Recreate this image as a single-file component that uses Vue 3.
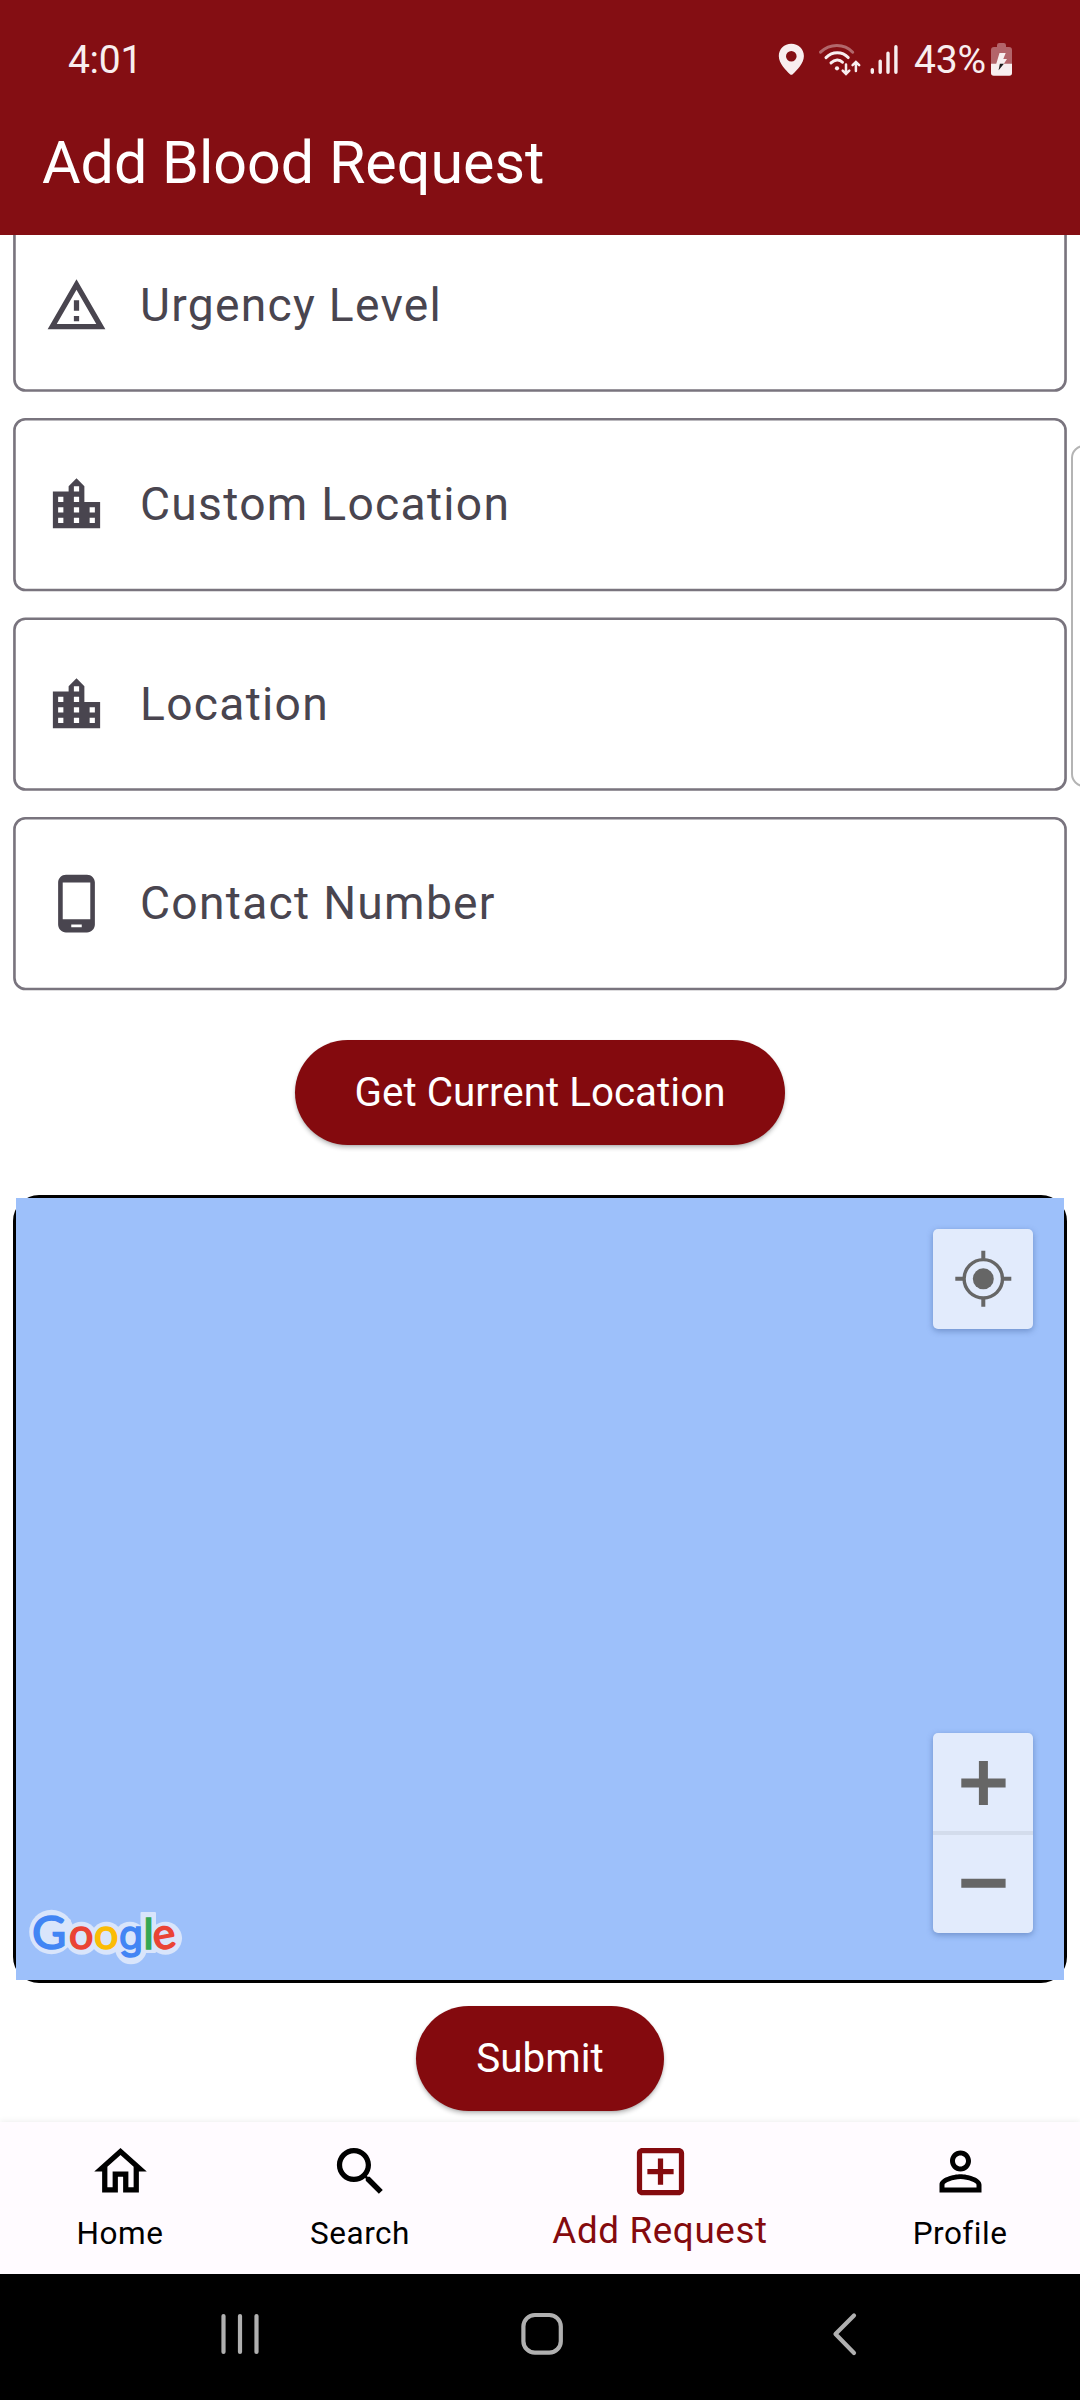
<script setup>
const cityIcon =
  'M15 11V5l-3-3-3 3v2H3v14h18V11h-6zm-8 8H5v-2h2v2zm0-4H5v-2h2v2zm0-4H5V9h2v2zm6 8h-2v-2h2v2zm0-4h-2v-2h2v2zm0-4h-2V9h2v2zm0-4h-2V5h2v2zm6 12h-2v-2h2v2zm0-4h-2v-2h2v2z'

const fields = [
  {
    label: 'Urgency Level',
    offset: 0.5,
    icon: 'M12 5.99L19.53 19H4.47L12 5.99M12 2L1 21h22L12 2zm1 14h-2v2h2v-2zm0-6h-2v4h2v-4z',
  },
  { label: 'Custom Location', offset: 0, icon: cityIcon },
  { label: 'Location', offset: 0.5, icon: cityIcon },
  {
    label: 'Contact Number',
    offset: 0,
    icon: 'M16 1H8C6.34 1 5 2.34 5 4v16c0 1.66 1.34 3 3 3h8c1.66 0 3-1.34 3-3V4c0-1.66-1.34-3-3-3zm-2 20h-4v-1h4v1zm3.25-3H6.75V4h10.5v14z',
  },
]

const tabs = [
  {
    label: 'Home',
    icon: 'M12 5.69l5 4.5V18h-2v-6H9v6H7v-7.81l5-4.5M12 3L2 12h3v8h6v-6h2v6h6v-8h3L12 3z',
  },
  {
    label: 'Search',
    icon: 'M15.5 14h-.79l-.28-.27C15.41 12.59 16 11.11 16 9.5 16 5.91 13.09 3 9.5 3S3 5.91 3 9.5 5.91 16 9.5 16c1.61 0 3.09-.59 4.23-1.57l.27.28v.79l5 4.99L20.49 19l-4.99-5zm-6 0C7.01 14 5 11.99 5 9.5S7.01 5 9.5 5 14 7.01 14 9.5 11.99 14 9.5 14z',
  },
  {
    label: 'Add Request',
    active: true,
    icon: 'M19 3H5c-1.11 0-2 .9-2 2v14c0 1.1.89 2 2 2h14c1.1 0 2-.9 2-2V5c0-1.1-.9-2-2-2zm0 16H5V5h14v14zm-8-2h2v-4h4v-2h-4V7h-2v4H7v2h4z',
  },
  {
    label: 'Profile',
    icon: 'M12 5.9c1.16 0 2.1.94 2.1 2.1s-.94 2.1-2.1 2.1S9.9 9.16 9.9 8s.94-2.1 2.1-2.1m0 9c2.97 0 6.1 1.46 6.1 2.1v1.1H5.9V17c0-.64 3.13-2.1 6.1-2.1M12 4C9.79 4 8 5.79 8 8s1.79 4 4 4 4-1.79 4-4-1.79-4-4-4zm0 9c-2.67 0-8 1.34-8 4v3h16v-3c0-2.66-5.33-4-8-4z',
  },
]
</script>

<template>
  <div class="phone">
    <header class="header">
      <div class="status">
        <span class="clock">4:01</span>
        <div class="indicators">
          <svg width="136" height="40" viewBox="0 0 136 40">
            <path
              fill="#f8eeef"
              fill-rule="evenodd"
              d="M13.3 3.7C6.2 3.7.8 9.1.8 15.9c0 7.4 7.2 14.3 11.2 18.3.8.7 1.9.7 2.7 0 4-4 11.2-10.9 11.2-18.3 0-6.8-5.5-12.2-12.6-12.2zM13.3 11a5.3 5.3 0 1 1 0 10.600a5.3 5.300 0 0 1 0-10.600z"
            />
            <g fill="none" stroke="#f8eeef" stroke-width="3" stroke-linecap="round">
              <path stroke-opacity=".4" d="M42.500 12.200c9.300-9 23.700-9 32.200 0" />
              <path d="M48 17.600c6.400-6.500 16.300-6.500 22.200 0" />
              <path d="M53 22.900c3.800-3.700 8.600-3.700 11.500-.7" />
              <path stroke-width="2.500" d="M68 24.500v9M64.700 30.700l3.300 3.300 3.300-3.300" />
              <path stroke-width="2.500" d="M77.900 31v-8.500M74.600 25.200l3.300-3.300 3.300 3.300" />
              <path stroke-width="3.400" d="M94.300 29.600v2.700M102.200 21.300v11M110 13.300v19M117.900 6.700v25.600" />
            </g>
            <circle cx="59" cy="28.300" r="2.100" fill="#f8eeef" />
          </svg>
          <span class="percent">43%</span>
          <svg width="22" height="40" viewBox="0 0 22 40">
            <path
              fill="#b3646a"
              d="M6 5.200Q6 3 8.200 3h4.600Q15 3 15 5.200V7h3q3 0 3 3v14H0V10q0-3 3-3h3z"
            />
            <path fill="#f8eeef" d="M0 23.700h21V33q0 2.700-2.700 2.700H2.700Q0 35.700 0 33z" />
            <path fill="#f8eeef" d="M8.500 13h6.200l-2.400 6H16l-3.300 5H5.200z" />
            <path fill="#1a1a1a" d="M8.900 23.700h4L7.600 30.200z" />
          </svg>
        </div>
      </div>
      <h1 class="title">Add Blood Request</h1>
    </header>

    <main class="content">
      <div class="form">
        <div v-for="field in fields" :key="field.label" class="field">
          <svg class="frame" width="1054" height="175">
            <rect
              x="1.440"
              :y="1.310 + field.offset"
              width="1051.100"
              height="170.630"
              rx="11"
              fill="none"
              stroke="#79747e"
              stroke-width="2.625"
            />
          </svg>
          <svg class="field-icon" viewBox="0 0 24 24"><path :d="field.icon" /></svg>
          <span class="field-label">{{ field.label }}</span>
        </div>
      </div>

      <button class="pill locate">Get Current Location</button>

      <section class="map">
        <div class="tiles">
          <div class="map-button">
            <svg width="100" height="100" viewBox="0 0 100 100" fill="none" stroke="#666">
              <circle cx="50.300" cy="49.800" r="19.200" stroke-width="3.400" />
              <circle cx="50.300" cy="49.800" r="10.500" fill="#666" stroke="none" />
              <path
                stroke-width="4"
                d="M50.300 21.700v8M50.300 69.800v8M22.300 49.800h8M70.300 49.800h8"
              />
            </svg>
          </div>
          <div class="map-footer">
            <svg class="brand" width="180" height="70" viewBox="0 0 180 70">
              <g fill="#d9e5fb">
                <circle cx="33.500" cy="32" r="22.300" />
                <circle cx="63.500" cy="38.300" r="16.500" />
                <circle cx="88.500" cy="38.300" r="16.500" />
                <circle cx="112" cy="38.300" r="16.500" />
                <circle cx="113" cy="48.500" r="15.800" />
                <rect x="122.500" y="12" width="15.500" height="41" rx="1" />
                <circle cx="147.500" cy="38.300" r="16.500" />
                <path d="M45 14l8 6v18H40zM160 30l4 8-4 8z" />
              </g>
              <g class="letters">
                <text x="14" y="49" class="cap blue">G</text>
                <text x="51" y="49" class="red">o</text>
                <text x="76" y="49" class="yellow">o</text>
                <text x="101" y="49" class="round-g blue">g</text>
                <text x="125.500" y="48.500" class="green">l</text>
                <text x="137" y="50.500" rotate="-10" class="red">e</text>
              </g>
            </svg>
            <div class="map-button zoom">
              <svg width="100" height="200" viewBox="0 0 100 200">
                <path fill="#d3dcec" d="M0 98h100v4H0z" />
                <path stroke="#666" stroke-width="9" d="M28.300 50h44.300M50.400 28v44M28.300 150.200h44.300" />
              </svg>
            </div>
          </div>
        </div>
      </section>

      <button class="pill submit">Submit</button>
      <div class="edge-handle"></div>
    </main>

    <nav class="tabs">
      <div v-for="tab in tabs" :key="tab.label" class="tab" :class="{ active: tab.active }">
        <svg viewBox="0 0 24 24"><path :d="tab.icon" /></svg>
        <span>{{ tab.label }}</span>
      </div>
    </nav>

    <footer class="system">
      <svg width="1080" height="126" fill="none" stroke="#b0b0b0" stroke-width="4.200" stroke-linecap="round">
        <path d="M223.500 42v36M240 42v36M256.500 42v36" />
        <rect x="523.400" y="41" width="37.400" height="37.700" rx="11.500" />
        <path stroke-linejoin="round" d="M854 41.500L835.500 60 854 79" />
      </svg>
    </footer>
  </div>
</template>

<style>
body {
  margin: 0;
  background: #fff;
}
</style>

<style scoped>
.phone {
  width: 1080px;
  height: 2400px;
  display: flex;
  flex-direction: column;
  overflow: hidden;
  background: #fff;
  font-family: Roboto, sans-serif;
}

.header {
  height: 235px;
  flex: none;
  background: #840e13;
  color: #fff;
}

.status {
  height: 57px;
  padding: 31px 67px 0 68px;
  display: flex;
  justify-content: space-between;
  align-items: center;
  color: #f8eeef;
  font-size: 39px;
}

.clock,
.percent {
  line-height: 58px;
}

.clock {
  letter-spacing: -0.3px;
}

.indicators {
  display: flex;
  align-items: center;
}

.percent {
  width: 77px;
  white-space: nowrap;
  letter-spacing: -0.2px;
}

.title {
  margin: 0;
  padding: 4px 0 0 42px;
  font-size: 59.2px;
  font-weight: 400;
  line-height: 142px;
}

.content {
  position: relative;
  height: 1887px;
  flex: none;
  display: flex;
  flex-direction: column;
  align-items: center;
  overflow: hidden;
}

.form {
  width: 1054px;
  margin-top: -17px;
  display: flex;
  flex-direction: column;
  gap: 26px;
}

.field {
  position: relative;
  height: 174px;
  display: flex;
  align-items: center;
  color: #49454f;
}

.field:nth-child(even) {
  height: 173px;
}

.frame {
  position: absolute;
  top: 0;
  left: 0;
}

.field-icon {
  width: 63px;
  height: 63px;
  margin: 0 32px 0 32px;
  fill: #49454f;
}

.field-label {
  font-size: 46.2px;
  line-height: 60px;
  letter-spacing: 1.28px;
}

.field:nth-child(even) .field-label {
  margin-bottom: 2px;
}

.pill {
  height: 105px;
  flex: none;
  padding: 0;
  border: 0;
  border-radius: 53px;
  background: #840a0e;
  color: #fff;
  font-family: inherit;
  font-size: 40.4px;
  box-shadow: 0 3px 4px rgba(0, 0, 0, 0.22), 0 1px 2px rgba(0, 0, 0, 0.1);
}

.locate {
  width: 490px;
  margin-top: 50px;
}

.submit {
  width: 248px;
  margin-top: 23px;
}

.map {
  box-sizing: border-box;
  width: 1054px;
  height: 788px;
  flex: none;
  margin-top: 50px;
  padding: 3px;
  border-radius: 26px;
  background: #000;
}

.tiles {
  box-sizing: border-box;
  height: 782px;
  padding: 31px 31px 47px 10px;
  display: flex;
  flex-direction: column;
  justify-content: space-between;
  align-items: flex-end;
  background: #9dc0fa;
}

.map-button {
  width: 100px;
  height: 100px;
  border-radius: 5px;
  background: #e2ebfc;
  box-shadow: 0 2px 6px rgba(40, 70, 130, 0.4);
}

.map-button svg {
  display: block;
}

.zoom {
  height: 200px;
}

.map-footer {
  width: 100%;
  display: flex;
  justify-content: space-between;
  align-items: flex-end;
}

.brand {
  margin-bottom: -37px;
  margin-left: -8px;
  font-family: Lato, sans-serif;
  font-size: 43px;
}

.letters text {
  stroke-width: 1.6px;
}

.letters .cap {
  font-size: 47px;
}

.letters .round-g {
  font-family: Inter, sans-serif;
  font-size: 39px;
}

.blue {
  fill: #4285f4;
  stroke: #4285f4;
}

.red {
  fill: #ea4335;
  stroke: #ea4335;
}

.yellow {
  fill: #fbbc05;
  stroke: #fbbc05;
}

.green {
  fill: #34a853;
  stroke: #34a853;
}

.edge-handle {
  position: absolute;
  top: 210px;
  right: -20px;
  box-sizing: border-box;
  width: 29px;
  height: 342px;
  border: 2px solid #b4b4b4;
  border-radius: 13px;
  background: #fff;
}

.tabs {
  position: relative;
  height: 152px;
  flex: none;
  display: flex;
  background: #fffbff;
  box-shadow: 0 -1px 6px rgba(0, 0, 0, 0.07);
}

.tab {
  width: 240px;
  padding-top: 18px;
  display: flex;
  flex-direction: column;
  align-items: center;
  color: #000;
  fill: #000;
  font-size: 31.5px;
  line-height: 62px;
  letter-spacing: 0.5px;
}

.tab svg {
  width: 63px;
  height: 63px;
}

.tab.active {
  width: 360px;
  color: #840a0e;
  fill: #840a0e;
  font-size: 36.75px;
  line-height: 56px;
  letter-spacing: 0.65px;
}

.system {
  height: 126px;
  flex: none;
  background: #000;
}

.system svg {
  display: block;
}
</style>
